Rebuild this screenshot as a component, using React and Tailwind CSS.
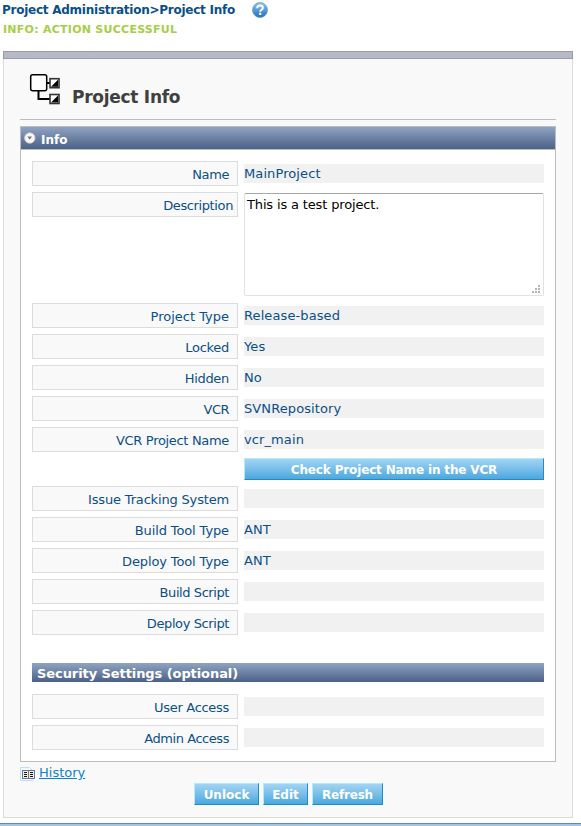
import React from "react";

const before = [
  ["Project Type", "Release-based", "tracking-normal"],
  ["Locked", "Yes", "tracking-[-0.3px]"],
  ["Hidden", "No", "tracking-[-0.3px]"],
  ["VCR", "SVNRepository", "tracking-[-0.5px]"],
  ["VCR Project Name", "vcr_main", "tracking-[-0.32px]"],
];
const after = [
  ["Issue Tracking System", "", "tracking-[-0.17px]"],
  ["Build Tool Type", "ANT", "tracking-[-0.12px]"],
  ["Deploy Tool Type", "ANT", "tracking-[-0.12px]"],
  ["Build Script", "", "tracking-[-0.42px]"],
  ["Deploy Script", "", "tracking-[-0.4px]"],
];

function Label({ children, tight, tracking }) {
  return (
    <div className={"h-[25px] w-[206px] shrink-0 border border-[#dcdcdc] bg-[#f9f9f9] text-right leading-[25px] " + (tight ? "pr-1 " : "pr-2 ") + tracking}>
      {children}
    </div>
  );
}

function Row({ label, value, tracking }) {
  return (
    <div className="flex items-start gap-1.5">
      <Label tracking={tracking}>{label}</Label>
      <div className="mt-[3px] h-[19px] w-[300px] bg-[#f1f1f1] leading-[19px] tracking-[0.1px]">{value}</div>
    </div>
  );
}

function Button({ children, className }) {
  return (
    <button className={"h-[22px] border border-t-[#b0ecfc] border-l-[#b0ecfc] border-r-[#258ac8] border-b-[#258ac8] bg-linear-to-b from-[#a2d4f3] to-[#48a8df] pt-px text-center text-[12px] font-bold leading-[20px] text-white " + className}>
      {children}
    </button>
  );
}

function HelpIcon() {
  return (
    <svg width="16" height="16" viewBox="0 0 16 16" role="img" aria-label="Help">
      <defs>
        <linearGradient id="help" x1="0" y1="0" x2="0" y2="1">
          <stop offset="0" stopColor="#8cc8f0" />
          <stop offset="1" stopColor="#2470bc" />
        </linearGradient>
      </defs>
      <circle cx="8" cy="8" r="7.5" fill="url(#help)" stroke="#5b94c6" strokeWidth=".7" />
      <path d="M5.200 6.200C5.200 4.300 6.400 3.600 8 3.600c1.700 0 2.800.9 2.800 2.300 0 1.900-2.600 1.800-2.600 3.900" fill="none" stroke="#fff" strokeWidth="2" />
      <rect x="7.100" y="10.800" width="2.200" height="2.200" fill="#fff" />
    </svg>
  );
}

function ProjectIcon() {
  return (
    <svg width="32" height="32" viewBox="0 0 32 32">
      <rect x="1.700" y="1.700" width="16" height="16" rx="2" fill="#fff" stroke="#000" strokeWidth="1.500" />
      <path d="M18 10h3M9.500 18v8h11.500" fill="none" stroke="#000" strokeWidth="2" />
      <rect x="21" y="5.700" width="9" height="9" fill="#fff" stroke="#333" strokeWidth="1.600" />
      <path d="M29 6.700v7h-7z" fill="#000" />
      <rect x="21" y="21.500" width="9" height="9" fill="#fff" stroke="#333" strokeWidth="1.600" />
      <path d="M29 22.500v7h-7z" fill="#000" />
    </svg>
  );
}

function CollapseIcon() {
  return (
    <svg width="12" height="12" viewBox="0 0 12 12">
      <circle cx="5.800" cy="6" r="5.300" fill="#f7f7f4" stroke="#c3c4c6" strokeWidth=".7" />
      <path d="M3.400 4.500h4.600L5.700 7.700z" fill="#777" />
    </svg>
  );
}

function HistoryIcon() {
  return (
    <svg width="16" height="14" viewBox="0 0 16 14">
      <path d="M.5.5h9l3 3v10H.5z" fill="#f4f9fe" stroke="#c6dcf2" />
      <rect x="2.500" y="3.500" width="12" height="8" fill="#f3ecd8" stroke="#5478b8" />
      <path d="M4 5.500h3M4 7.500h3M4 9.500h3M10 5.500h3M10 7.500h3M10 9.500h3" stroke="#111" />
      <path d="M8.500 3v9" stroke="#777" />
    </svg>
  );
}

function Grip() {
  return (
    <svg width="8" height="8" viewBox="0 0 8 8" className="absolute right-[3px] bottom-[2px]" fill="#b8b5ac">
      <path d="M6 0h2v2H6zM3 3h2v2H3zM6 3h2v2H6zM0 6h2v2H0zM3 6h2v2H3zM6 6h2v2H6z" />
    </svg>
  );
}

export default function App() {
  return (
    <div className="flex h-[826px] w-[581px] flex-col overflow-hidden bg-white font-['DejaVu_Sans',sans-serif] text-[13px] text-[#0a4f8a]">
      <header className="h-[51px] pl-[3px]">
        <div className="flex h-5 items-center whitespace-nowrap text-[12px] font-bold tracking-[-0.25px]">
          <span className="-ml-px w-[250px]">Project Administration&gt;Project Info</span>
          <HelpIcon />
        </div>
        <div className="h-[19px] text-[11px] font-bold leading-[19px] tracking-[0.26px] text-[#a5cf45]">INFO: ACTION SUCCESSFUL</div>
      </header>
      <div className="ml-[3px] h-2 w-[570px] shrink-0 border border-[#9a9ca9] bg-[#b5b9c8]" />
      <main className="ml-[3px] h-[759px] w-[570px] shrink-0 border border-t-0 border-[#dcdcdc] bg-[#f9f9f9] px-4">
        <div className="flex h-[61px] border-b border-[#bdbdbd]">
          <div className="mt-[14px] ml-[9px] w-[43px]"><ProjectIcon /></div>
          <h1 className="mt-[26px] text-[17px] font-bold leading-6 tracking-[-0.27px] text-[#404040]">Project Info</h1>
        </div>
        <section className="mt-[6px] h-[636px] border border-[#bdbdbd] bg-white">
          <div className="flex h-[23px] items-center gap-[5px] border-b border-[#bdbdbd] bg-linear-to-b from-[#90a3c2] to-[#4c6188] pl-[3px] text-[12px] font-bold text-white">
            <CollapseIcon />
            <span className="pt-[3px]">Info</span>
          </div>
          <div className="flex flex-col gap-1.5 px-[11px] pt-[11px]">
            <Row label="Name" value="MainProject" tracking="tracking-[-0.4px]" />
            <div className="flex h-[105px] items-start gap-1.5">
              <Label tight tracking="tracking-[-0.38px]">Description</Label>
              <div className="relative mt-px h-[103px] w-[300px] rounded-[2px] border border-[#e0e2ea] border-t-[#a5a7ac] bg-white px-[2px] pt-[2px] leading-[17px] tracking-[-0.15px] text-black">
                This is a test project.
                <Grip />
              </div>
            </div>
            {before.map(([l, v, t]) => <Row key={l} label={l} value={v} tracking={t} />)}
            <Button className="ml-[212px] w-[300px] tracking-[-0.15px]">Check Project Name in the VCR</Button>
            {after.map(([l, v, t]) => <Row key={l} label={l} value={v} tracking={t} />)}
            <div className="mt-[22px] mb-[6px] h-[19px] bg-linear-to-b from-[#90a3c2] to-[#4c6188] pl-[5px] font-bold leading-[21px] tracking-[-0.08px] text-white">Security Settings (optional)</div>
            <Row label="User Access" value="" tracking="tracking-[-0.3px]" />
            <Row label="Admin Access" value="" tracking="tracking-[-0.45px]" />
          </div>
        </section>
        <div className="flex h-[21px] items-start gap-[3px]">
          <div className="mt-[5px]"><HistoryIcon /></div>
          <a className="mt-[2px] leading-[18px] text-[#0a84cc] underline">History</a>
        </div>
        <div className="flex gap-1 pl-[174px]">
          <Button className="w-[65px]">Unlock</Button>
          <Button className="w-[45px]">Edit</Button>
          <Button className="w-[71px] tracking-[-0.2px]">Refresh</Button>
        </div>
      </main>
      <div className="mt-[5px] h-[3px] shrink-0 border-t border-[#5f8bb3] bg-[#a3c4e4]" />
    </div>
  );
}
